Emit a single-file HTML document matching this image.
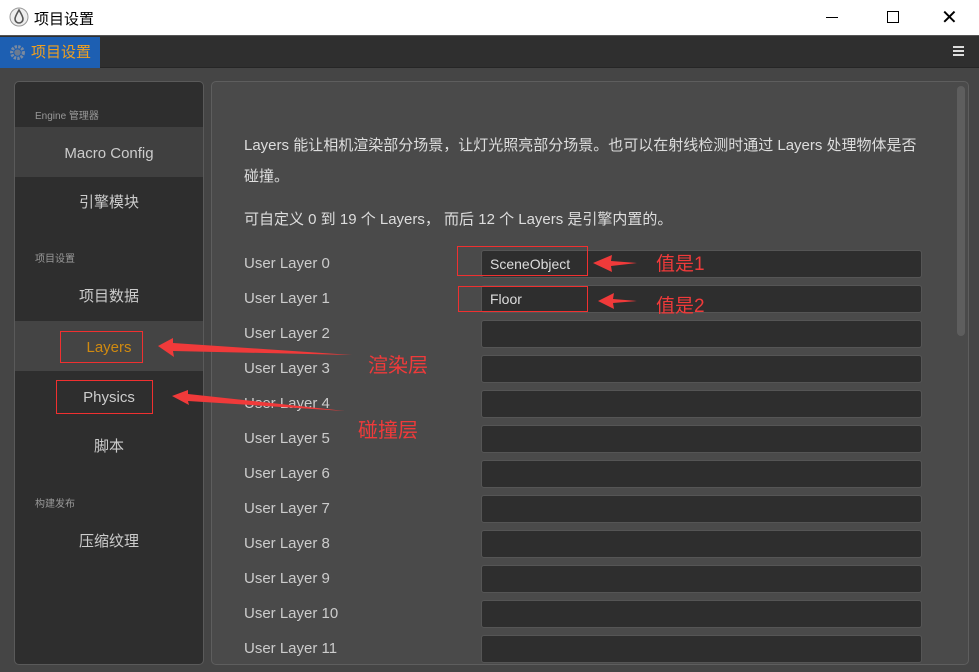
<!DOCTYPE html><html><head><meta charset="utf-8"><style>
*{box-sizing:border-box;margin:0;padding:0}
body{width:979px;height:672px;overflow:hidden;background:#454545;font-family:"Liberation Sans","Noto Sans CJK SC",sans-serif;position:relative}
.a{position:absolute}
.title{left:0;top:0;width:979px;height:36px;background:#fff;border-bottom:1px solid #555}
.tb{left:0;top:36px;width:979px;height:32px;background:#2f2f2f;border-bottom:1px solid #262626}
.tab{left:0;top:37px;width:100px;height:31px;background:#1d5fb2;color:#f0a020;font-size:15px;line-height:31px;padding-left:31px}
.lp{left:14px;top:81px;width:190px;height:584px;background:#2e2e2e;border:1px solid #5a5a5a;border-radius:5px}
.rp{left:211px;top:81px;width:758px;height:584px;background:#4a4a4a;border:1px solid #5e5e5e;border-radius:5px}
.sec{left:35px;font-size:10px;color:#999}
.it{left:15px;width:188px;height:50px;line-height:54px;text-align:center;color:#ccc;font-size:15px}
.lbl{left:244px;color:#ccc;font-size:15px}
.inp{left:481px;width:441px;height:28px;background:#2e2e2e;border:1px solid #555;border-radius:3px;color:#ddd;font-size:14px;line-height:26px;padding-left:8px}
.red{border:1px solid #f03030}
.rt{color:#f03a3a;font-size:19px}
.txt{left:244px;color:#ddd;font-size:15px}
</style></head><body>
<div class="a title"></div>
<svg class="a" style="left:9px;top:7px" width="20" height="20" viewBox="0 0 20 20"><circle cx="10" cy="10" r="9" fill="#eee" stroke="#999"/><path d="M10 3 C7 8 6 10 6 12 A4 4 0 0 0 14 12 C14 10 13 8 10 3Z" fill="none" stroke="#555" stroke-width="1.6"/></svg>
<div class="a" style="left:34px;top:8px;font-size:15px;color:#000">项目设置</div>
<div class="a" style="left:826px;top:17px;width:12px;height:1px;background:#000"></div>
<div class="a" style="left:887px;top:11px;width:12px;height:12px;border:1px solid #000"></div>
<div class="a" style="left:941px;top:5px;font-size:20px;color:#000">✕</div>
<div class="a tb"></div>
<div class="a tab">项目设置</div>
<svg class="a" style="left:9px;top:44px" width="17" height="17" viewBox="0 0 16 16"><circle cx="8" cy="8" r="5.5" fill="none" stroke="#7a8aa0" stroke-width="3" stroke-dasharray="2.2 1.1"/><circle cx="8" cy="8" r="3" fill="#6a7a90"/></svg>
<div class="a" style="left:953px;top:46px;width:11px;height:2px;background:#ddd;box-shadow:0 4px #ddd,0 8px #ddd"></div>
<div class="a lp"></div>
<div class="a rp"></div>
<div class="a" style="left:957px;top:86px;width:8px;height:250px;background:#5e5e5e;border-radius:4px"></div>
<div class="a sec" style="top:107px">Engine 管理器</div>
<div class="a it" style="top:127px;background:#404040">Macro Config</div>
<div class="a it" style="top:176px">引擎模块</div>
<div class="a sec" style="top:250px">项目设置</div>
<div class="a it" style="top:270px">项目数据</div>
<div class="a it" style="top:321px;background:#444;color:#d08a10">Layers</div>
<div class="a it" style="top:371px">Physics</div>
<div class="a it" style="top:420px">脚本</div>
<div class="a sec" style="top:495px">构建发布</div>
<div class="a it" style="top:515px">压缩纹理</div>
<div class="a red" style="left:60px;top:331px;width:83px;height:32px"></div>
<div class="a red" style="left:56px;top:380px;width:97px;height:34px"></div>
<div class="a txt" style="top:134px">Layers 能让相机渲染部分场景，让灯光照亮部分场景。也可以在射线检测时通过 Layers 处理物体是否</div>
<div class="a txt" style="top:165px">碰撞。</div>
<div class="a txt" style="top:208px">可自定义 0 到 19 个 Layers， 而后 12 个 Layers 是引擎内置的。</div>
<div class="a lbl" style="top:255px">User Layer 0</div><div class="a inp" style="top:250px">SceneObject</div>
<div class="a lbl" style="top:290px">User Layer 1</div><div class="a inp" style="top:285px">Floor</div>
<div class="a lbl" style="top:325px">User Layer 2</div><div class="a inp" style="top:320px"></div>
<div class="a lbl" style="top:360px">User Layer 3</div><div class="a inp" style="top:355px"></div>
<div class="a lbl" style="top:395px">User Layer 4</div><div class="a inp" style="top:390px"></div>
<div class="a lbl" style="top:430px">User Layer 5</div><div class="a inp" style="top:425px"></div>
<div class="a lbl" style="top:465px">User Layer 6</div><div class="a inp" style="top:460px"></div>
<div class="a lbl" style="top:500px">User Layer 7</div><div class="a inp" style="top:495px"></div>
<div class="a lbl" style="top:535px">User Layer 8</div><div class="a inp" style="top:530px"></div>
<div class="a lbl" style="top:570px">User Layer 9</div><div class="a inp" style="top:565px"></div>
<div class="a lbl" style="top:605px">User Layer 10</div><div class="a inp" style="top:600px"></div>
<div class="a lbl" style="top:640px">User Layer 11</div><div class="a inp" style="top:635px"></div>
<div class="a red" style="left:457px;top:246px;width:131px;height:30px"></div>
<div class="a red" style="left:458px;top:286px;width:130px;height:26px"></div>
<svg class="a" style="left:0;top:0" width="979" height="672">
<g fill="#f03a3a">
<polygon points="593,263 612,255 611,261 637,263 611,266 612,272"/>
<polygon points="598,301 614,293 613,299 637,301 613,303 614,309"/>
<polygon points="158,346 173,338 173,343 352,355 173,351 174,357"/>
<polygon points="172,396 188,390 188,394 345,411 188,401 189,405"/>
</g></svg>
<div class="a rt" style="left:656px;top:249px">值是1</div>
<div class="a rt" style="left:656px;top:291px">值是2</div>
<div class="a rt" style="left:368px;top:349px;font-size:20px">渲染层</div>
<div class="a rt" style="left:358px;top:414px;font-size:20px">碰撞层</div>
</body></html>
